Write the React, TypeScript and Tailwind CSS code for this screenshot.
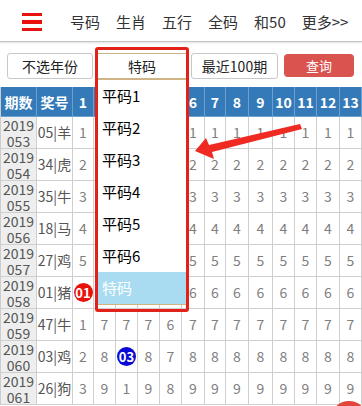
import React from "react";

type Cell = string | { ball: string; color: string };

const fill = (v: string, n: number) => Array.from({ length: n }, () => v);

// columns 2-5 of the first rows lie under the open dropdown and are not visible
const hidden = (v: string): Cell[] => [v, "", "", "", "", ...fill(v, 8)];

const rows: { p: string; z: string; v: Cell[] }[] = [
  { p: "053", z: "05|羊", v: hidden("1") },
  { p: "054", z: "34|虎", v: hidden("2") },
  { p: "055", z: "35|牛", v: hidden("3") },
  { p: "056", z: "18|马", v: hidden("4") },
  { p: "057", z: "27|鸡", v: hidden("5") },
  { p: "058", z: "01|猪", v: [{ ball: "01", color: "bg-[#e8120c]" }, "", "", "", "", ...fill("6", 8)] },
  { p: "059", z: "47|牛", v: ["1", "7", "7", "7", "6", ...fill("7", 8)] },
  { p: "060", z: "03|鸡", v: ["2", "8", { ball: "03", color: "bg-[#0a0ad6]" }, "8", "7", ...fill("8", 8)] },
  { p: "061", z: "26|狗", v: ["3", "9", "1", "9", "8", ...fill("9", 8)] },
];

const header = ["期数", "奖号", "1", "", "", "", "", "6", "7", "8", "9", "10", "11", "12", "13"];

const navItems = ["号码", "生肖", "五行", "全码", "和50", "更多>>"];
const options = ["平码1", "平码2", "平码3", "平码4", "平码5", "平码6"];

export default function App() {
  const gridCols = "grid grid-cols-[36px_36px_21px_22px_22px_22px_22px_23px_21px_23px_24px_22px_22px_23px_22px]";
  return (
    <div className="relative w-[362px] h-[406px] overflow-hidden bg-white font-['Noto_Sans_CJK_SC',sans-serif] text-[#333]">
      {/* nav */}
      <div className="h-[42px] border-b border-[#c4c4c4] shadow-[0_1px_2px_rgba(0,0,0,0.12)] flex items-center">
        <div className="ml-[22px] w-[20px] flex flex-col gap-[4px] mt-[3px]">
          <div className="h-[3.5px] bg-[#e8120c]" />
          <div className="h-[3.5px] bg-[#e8120c]" />
          <div className="h-[3.5px] bg-[#e8120c]" />
        </div>
        <div className="ml-[28px] flex gap-[16px] text-[15px] leading-[20px] text-[#333] mt-[2px]">
          {navItems.map((t) => (
            <span key={t}>{t}</span>
          ))}
        </div>
      </div>

      {/* filter row */}
      <div className="flex pl-[7px] pt-[11px] pb-[8px] text-[14px] leading-[20px]">
        <div className="w-[86px] h-[26px] border border-[#c8c8c8] rounded-[3px] flex items-center justify-center text-[#222]">
          不选年份
        </div>
        <div className="ml-[4px] w-[90px] h-[26px] border border-[#cdb386] flex items-center justify-center text-[#222]">
          特码
        </div>
        <div className="ml-[4px] w-[87px] h-[26px] border border-[#c8c8c8] rounded-[3px] flex items-center justify-center text-[#222]">
          最近100期
        </div>
        <div className="ml-[6px] mt-[1px] w-[70px] h-[23px] rounded-[4px] bg-[#d9534f] flex items-center justify-center text-white text-[13px]">
          查询
        </div>
      </div>

      {/* table */}
      <div className={`${gridCols} border-l border-[#ccc]`}>
        {header.map((h, i) => (
          <div
            key={i}
            className="h-[30px] bg-[#347ab9] border-r border-b border-[#6f9fcf] flex items-center justify-center text-white font-bold text-[14px] leading-[16px]"
          >
            {h}
          </div>
        ))}
        {rows.map((r) => (
          <React.Fragment key={r.p}>
            <div className="h-[32px] bg-[#eeeeee] border-r border-b border-[#cfcfcf] flex flex-col items-center justify-center text-[14px] leading-[16px] text-[#555]">
              <span>2019</span>
              <span>{r.p}</span>
            </div>
            <div className="h-[32px] border-r border-b border-[#cfcfcf] flex items-center justify-center text-[14px] text-[#555] whitespace-nowrap">
              {r.z}
            </div>
            {r.v.map((c, i) => (
              <div
                key={i}
                className="h-[32px] border-r border-b border-[#cfcfcf] flex items-center justify-center text-[14px] text-[#808080]"
              >
                {typeof c === "string" ? (
                  c
                ) : (
                  <span
                    className={`w-[19px] h-[19px] rounded-full ${c.color} text-white font-bold text-[13px] leading-[19px] flex items-center justify-center`}
                  >
                    {c.ball}
                  </span>
                )}
              </div>
            ))}
          </React.Fragment>
        ))}
      </div>

      {/* dropdown list */}
      <div className="absolute left-[97px] top-[79px] w-[90px] h-[226px] bg-white border border-[#cdb386]">
        {options.map((o) => (
          <div key={o} className="h-[32px] pl-[4px] flex items-center text-[15px] text-black leading-[18px]">
            {o}
          </div>
        ))}
        <div className="h-[32px] pl-[4px] flex items-center text-[15px] text-white bg-[#a9dcf1] leading-[18px]">
          特码
        </div>
      </div>

      {/* red highlight box */}
      <div className="absolute left-[95px] top-[47px] w-[94px] h-[265px] border-[3px] border-[#e3211b] rounded-[3px] pointer-events-none" />

      {/* arrow */}
      <svg className="absolute left-0 top-0 pointer-events-none" width="362" height="406" viewBox="0 0 362 406">
        <polygon
          points="195,151 206,138 209,145 300,124 302,129 212,152 214,159"
          fill="#ee2a22"
        />
      </svg>

      {/* floating circle */}
      <div className="absolute left-[331px] top-[401px] w-[36px] h-[36px] rounded-full bg-[#e2453b]" />
    </div>
  );
}
